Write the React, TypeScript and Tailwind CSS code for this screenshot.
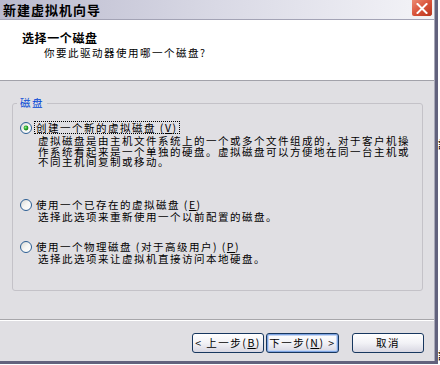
import React from "react";

function Radio({ checked }: { checked?: boolean }) {
  return (
    <svg width="12" height="12" viewBox="0 0 12 12" className="shrink-0">
      <defs>
        <linearGradient id={checked ? "rg1" : "rg0"} x1="0" y1="0" x2="1" y2="1">
          <stop offset="0" stopColor="#d6d6d0" />
          <stop offset="0.5" stopColor="#f6f6f4" />
          <stop offset="1" stopColor="#ffffff" />
        </linearGradient>
        <radialGradient id="dot" cx="0.4" cy="0.4" r="0.6">
          <stop offset="0" stopColor="#8ee68e" />
          <stop offset="0.6" stopColor="#27a927" />
          <stop offset="1" stopColor="#137713" />
        </radialGradient>
      </defs>
      <circle cx="6" cy="6" r="5.5" fill={`url(#${checked ? "rg1" : "rg0"})`} stroke="#2a5d92" strokeWidth="1" />
      {checked && <circle cx="6" cy="6" r="2.4" fill="url(#dot)" />}
    </svg>
  );
}

function CloseBtn() {
  return (
    <div className="w-[22px] h-[17px] rounded-b-[3px] border border-t-0 border-[#f2f2f2] bg-gradient-to-br from-[#ec8b73] via-[#d9533a] to-[#b8351d] flex items-center justify-center shrink-0">
      <svg width="12" height="11" viewBox="0 0 12 11">
        <path d="M1.5 1 L10.5 10 M10.5 1 L1.5 10" stroke="#ffffff" strokeWidth="2" strokeLinecap="square" />
      </svg>
    </div>
  );
}

function Btn({ children, def, w }: { children: React.ReactNode; def?: boolean; w: string }) {
  return (
    <div
      className={
        def
          ? `${w} h-[20px] rounded-[3px] border border-[#17375f] bg-gradient-to-b from-[#ffffff] via-[#f2f2f6] to-[#d8d7e2] shadow-[inset_0_0_0_1px_#7ea4e2,inset_0_0_0_2px_#c5d6f3] flex items-center justify-center text-[10.5px] tracking-[1.5px] leading-none`
          : `${w} h-[20px] rounded-[3px] border border-[#17375f] bg-gradient-to-b from-[#ffffff] via-[#f2f2f6] to-[#d8d7e2] flex items-center justify-center text-[10.5px] tracking-[1.5px] leading-none`
      }
    >
      {children}
    </div>
  );
}

export default function App() {
  return (
    <div className="w-[440px] h-[365px] bg-white flex overflow-hidden font-['Noto_Sans_CJK_SC',sans-serif] text-black">
      <div className="w-[438px] h-[364px] shrink-0 flex flex-col border-r-[3px] border-b-[3px] border-[#62627d]">
        {/* title bar */}
        <div className="h-[19px] shrink-0 flex items-start justify-between bg-gradient-to-r from-[#babace] via-[#d9d9e5] to-[#f4f4f8] pl-[3px] pr-[1px] border-r border-[#a9a9b9]">
          <span className="text-[13px] font-bold tracking-[1px] leading-[19px]">新建虚拟机向导</span>
          <CloseBtn />
        </div>
        <div className="h-px shrink-0 bg-[#a3a3b5]" />
        <div className="flex-1 flex flex-col border-r border-[#a9a9b9] min-h-0">
          {/* header */}
          <div className="h-[60px] shrink-0 bg-white pt-[11px] pl-[22px]">
            <div className="text-[12px] font-bold tracking-[0.6px] leading-[13px]">选择一个磁盘</div>
            <div className="mt-[3px] ml-[22px] text-[10.5px] tracking-[1.5px] leading-[11px]">你要此驱动器使用哪一个磁盘?</div>
          </div>
          <div className="h-px shrink-0 bg-[#a2a2aa]" />
          {/* body */}
          <div className="flex-1 bg-[#e0dfe3] flex flex-col">
            <div className="relative mt-[22px] ml-[12px] w-[411px] h-[188px] border border-[#c4c2c8] rounded-[3px] pt-[17px] text-[10.5px] tracking-[1.5px]">
              <span className="absolute left-[4px] top-[-7px] px-[3px] bg-[#e0dfe3] text-[#0046d5] leading-[12px]">磁盘</span>

              <div className="flex items-center h-[13px] ml-[7px]">
                <Radio checked />
                <span className="ml-[2px] px-[1px] border border-dotted border-black leading-[11px]">
                  创建一个新的虚拟磁盘 (<u>V</u>)
                </span>
              </div>
              <div className="mt-[2px] ml-[25px] leading-[10.5px] whitespace-nowrap">
                <div>虚拟磁盘是由主机文件系统上的一个或多个文件组成的，对于客户机操</div>
                <div>作系统看起来是一个单独的硬盘。虚拟磁盘可以方便地在同一台主机或</div>
                <div>不同主机间复制或移动。</div>
              </div>

              <div className="flex items-center h-[13px] ml-[7px] mt-[30.5px]">
                <Radio />
                <span className="ml-[2px] px-[1px] border border-transparent leading-[11px]">
                  使用一个已存在的虚拟磁盘 (<u>E</u>)
                </span>
              </div>
              <div className="mt-[1px] ml-[25px] leading-[10.5px] whitespace-nowrap">
                选择此选项来重新使用一个以前配置的磁盘。
              </div>

              <div className="flex items-center h-[13px] ml-[7px] mt-[17.5px]">
                <Radio />
                <span className="ml-[2px] px-[1px] border border-transparent leading-[11px]">
                  使用一个物理磁盘 (对于高级用户) (<u>P</u>)
                </span>
              </div>
              <div className="mt-[1px] ml-[25px] leading-[10.5px] whitespace-nowrap">
                选择此选项来让虚拟机直接访问本地硬盘。
              </div>
            </div>

            <div className="mt-[28px] h-px bg-[#a7a6aa]" />
            <div className="h-px bg-white" />

            <div className="mt-[12px] flex justify-end pr-[10px]">
              <Btn w="w-[72px]">&lt; 上一步(<u>B</u>)</Btn>
              <div className="w-[2px]" />
              <Btn w="w-[73px]" def>
                下一步(<u>N</u>) &gt;
              </Btn>
              <div className="w-[13px]" />
              <Btn w="w-[72px]">取消</Btn>
            </div>
          </div>
        </div>
      </div>
      <div className="w-[2px] overflow-hidden flex flex-col text-[11px] leading-[11px] pt-[139px]">
        <span>話</span>
        <span className="mt-[200px]">話</span>
      </div>
    </div>
  );
}
